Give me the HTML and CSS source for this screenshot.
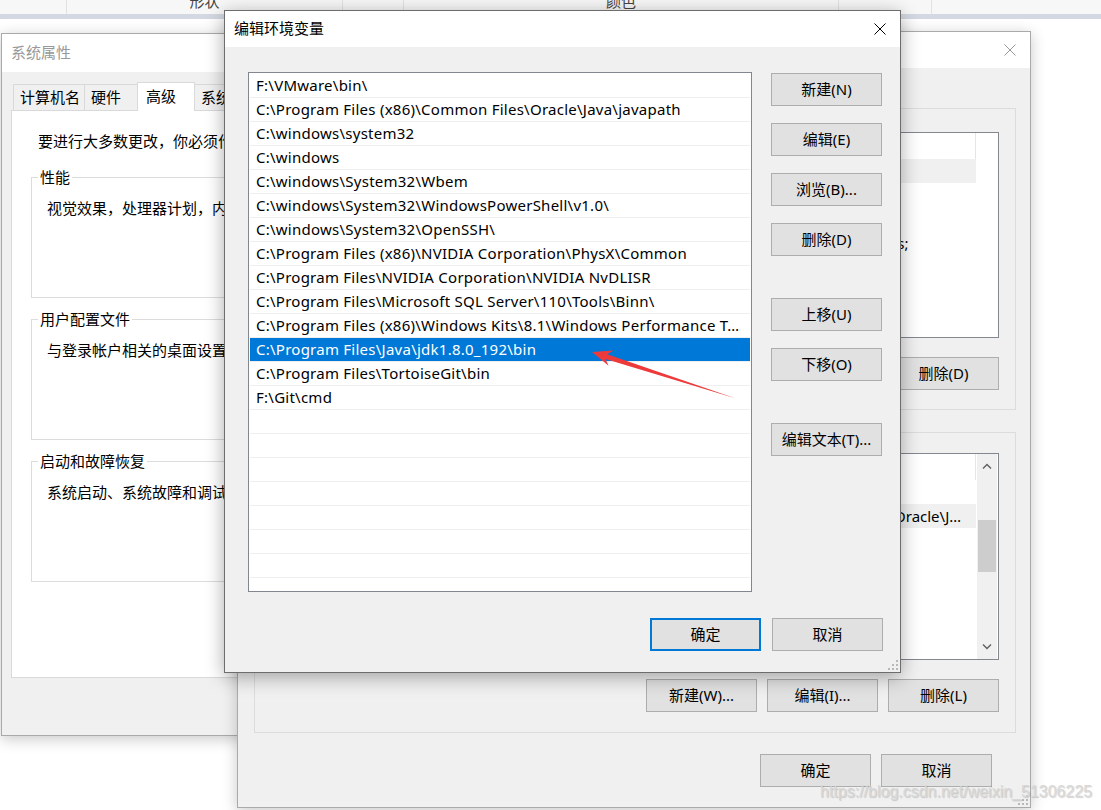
FILE: index.html
```html
<!DOCTYPE html>
<html lang="zh-CN">
<head>
    <meta charset="UTF-8">
    <title>编辑环境变量</title>
    <link rel="stylesheet" href="styles.css">
</head>
<body>
<div class="screen">

    <!-- 后面表格的表头 -->
    <div class="sheet-head">
        <div class="cell c1"></div>
        <div class="cell c2"><span>形状</span></div>
        <div class="cell c3"></div>
        <div class="cell c4"><span>颜色</span></div>
        <div class="cell c5"></div>
        <div class="cell c6"></div>
    </div>

    <!-- 系统属性 -->
    <div class="win win-sys">
        <div class="titlebar"><span class="title">系统属性</span></div>
        <div class="sys-body">
            <div class="tabs">
                <div class="tab t1">计算机名</div>
                <div class="tab t2">硬件</div>
                <div class="tab t3 active">高级</div>
                <div class="tab t4">系统保护</div>
                <div class="tab t5">远程</div>
            </div>
            <div class="tab-panel">
                <p class="note">要进行大多数更改，你必须作为管理员登录。</p>
                <fieldset class="sys-group">
                    <legend>性能</legend>
                    <p>视觉效果，处理器计划，内存使用，以及虚拟内存</p>
                </fieldset>
                <fieldset class="sys-group">
                    <legend>用户配置文件</legend>
                    <p>与登录帐户相关的桌面设置</p>
                </fieldset>
                <fieldset class="sys-group">
                    <legend>启动和故障恢复</legend>
                    <p>系统启动、系统故障和调试信息</p>
                </fieldset>
            </div>
        </div>
    </div>

    <!-- 环境变量 -->
    <div class="win win-env">
        <div class="titlebar">
            <span class="title">环境变量</span>
            <svg class="close dim" width="12" height="12" viewBox="0 0 12 12"><path d="M0.5 0.5L11.5 11.5M11.5 0.5L0.5 11.5"/></svg>
        </div>
        <div class="env-body">
            <fieldset class="var-group user-vars">
                <legend>ASUS 的用户变量(U)</legend>
                <div class="listview">
                    <div class="table-wrap">
                        <table class="vars">
                            <colgroup><col class="col-name"><col></colgroup>
                            <thead><tr><th>变量</th><th>值</th></tr></thead>
                            <tbody>
                                <tr class="sel"><td>ChocolateyLastPathUpdate</td><td>132493586213404718</td></tr>
                                <tr><td>IntelliJ IDEA</td><td>F:\IntelliJ IDEA 2019.3.3\bin;</td></tr>
                                <tr><td>OneDrive</td><td>C:\Users\ASUS\OneDrive</td></tr>
                                <tr><td>Path</td><td>C:\Users\ASUS\AppData\Local\Microsoft\WindowsApps;</td></tr>
                                <tr><td>TEMP</td><td>%USERPROFILE%\AppData\Local\Temp</td></tr>
                                <tr><td>TMP</td><td>%USERPROFILE%\AppData\Local\Temp</td></tr>
                            </tbody>
                        </table>
                    </div>
                </div>
                <div class="btn-row">
                    <button class="btn">新建(N)...</button>
                    <button class="btn">编辑(E)...</button>
                    <button class="btn">删除(D)</button>
                </div>
            </fieldset>

            <fieldset class="var-group sys-vars">
                <legend>系统变量(S)</legend>
                <div class="listview">
                    <div class="table-wrap">
                        <table class="vars">
                            <colgroup><col class="col-name"><col></colgroup>
                            <thead><tr><th>变量</th><th>值</th></tr></thead>
                            <tbody>
                                <tr><td>OS</td><td>Windows_NT</td></tr>
                                <tr class="sel"><td>Path</td><td>F:\VMware\bin\;C:\Program Files (x86)\Common Files\Oracle\Java\javapath;C:\windows\system32;C:\windows</td></tr>
                                <tr><td>PATHEXT</td><td>.COM;.EXE;.BAT;.CMD;.VBS;.VBE;.JS;.JSE;.WSF;.WSH;.MSC</td></tr>
                                <tr><td>PROCESSOR_ARCHITECTURE</td><td>AMD64</td></tr>
                                <tr><td>PROCESSOR_IDENTIFIER</td><td>Intel64 Family 6 Model 158 Stepping 10</td></tr>
                                <tr><td>PROCESSOR_LEVEL</td><td>6</td></tr>
                                <tr><td>PROCESSOR_REVISION</td><td>9e0a</td></tr>
                            </tbody>
                        </table>
                    </div>
                    <div class="scrollbar">
                        <div class="sb-btn"><svg width="10" height="6" viewBox="0 0 10 6"><path d="M1 5.5L5 1.5L9 5.5"/></svg></div>
                        <div class="sb-track"><div class="sb-thumb"></div></div>
                        <div class="sb-btn"><svg width="10" height="6" viewBox="0 0 10 6"><path d="M1 0.5L5 4.5L9 0.5"/></svg></div>
                    </div>
                </div>
                <div class="btn-row">
                    <button class="btn">新建(W)...</button>
                    <button class="btn">编辑(I)...</button>
                    <button class="btn">删除(L)</button>
                </div>
            </fieldset>

            <div class="btn-row dialog-btns">
                <button class="btn">确定</button>
                <button class="btn">取消</button>
            </div>
        </div>
        <svg class="grip" width="10" height="10" viewBox="0 0 10 10"><rect x="8" y="0" width="2" height="2"/><rect x="4" y="4" width="2" height="2"/><rect x="8" y="4" width="2" height="2"/><rect x="0" y="8" width="2" height="2"/><rect x="4" y="8" width="2" height="2"/><rect x="8" y="8" width="2" height="2"/></svg>
    </div>

    <!-- 编辑环境变量 -->
    <div class="win win-edit">
        <div class="titlebar">
            <span class="title">编辑环境变量</span>
            <svg class="close" width="12" height="12" viewBox="0 0 12 12"><path d="M0.5 0.5L11.5 11.5M11.5 0.5L0.5 11.5"/></svg>
        </div>
        <div class="edit-body">
            <div class="edit-main">
                <ul class="path-list">
                    <li>F:\VMware\bin\</li>
                    <li>C:\Program Files (x86)\Common Files\Oracle\Java\javapath</li>
                    <li>C:\windows\system32</li>
                    <li>C:\windows</li>
                    <li>C:\windows\System32\Wbem</li>
                    <li>C:\windows\System32\WindowsPowerShell\v1.0\</li>
                    <li>C:\windows\System32\OpenSSH\</li>
                    <li>C:\Program Files (x86)\NVIDIA Corporation\PhysX\Common</li>
                    <li>C:\Program Files\NVIDIA Corporation\NVIDIA NvDLISR</li>
                    <li>C:\Program Files\Microsoft SQL Server\110\Tools\Binn\</li>
                    <li>C:\Program Files (x86)\Windows Kits\8.1\Windows Performance Toolkit\</li>
                    <li class="sel">C:\Program Files\Java\jdk1.8.0_192\bin</li>
                    <li>C:\Program Files\TortoiseGit\bin</li>
                    <li>F:\Git\cmd</li>
                    <li></li><li></li><li></li><li></li><li></li><li></li><li></li><li></li>
                </ul>
                <div class="side-btns">
                    <button class="btn">新建(N)</button>
                    <button class="btn">编辑(E)</button>
                    <button class="btn">浏览(B)...</button>
                    <button class="btn">删除(D)</button>
                    <button class="btn gap-lg">上移(U)</button>
                    <button class="btn">下移(O)</button>
                    <button class="btn gap-lg">编辑文本(T)...</button>
                </div>
            </div>
            <div class="btn-row edit-foot">
                <button class="btn default">确定</button>
                <button class="btn">取消</button>
            </div>
        </div>
        <svg class="grip" width="10" height="10" viewBox="0 0 10 10"><rect x="8" y="0" width="2" height="2"/><rect x="4" y="4" width="2" height="2"/><rect x="8" y="4" width="2" height="2"/><rect x="0" y="8" width="2" height="2"/><rect x="4" y="8" width="2" height="2"/><rect x="8" y="8" width="2" height="2"/></svg>
    </div>

    <!-- 红色箭头标注 -->
    <svg class="mark-arrow" width="160" height="66" viewBox="0 0 160 66">
        <polygon points="7,12 28.5,10.5 22.1,14.2 151,58.5 20.5,19 23.6,25.7"/>
    </svg>

    <div class="watermark">https://blog.csdn.net/weixin_51306225</div>
</div>
</body>
</html>
```

FILE: styles.css
```css
* {
    margin: 0;
    padding: 0;
    box-sizing: border-box;
}

body {
    font-family: "Noto Sans", "Noto Sans CJK SC", sans-serif;
    font-size: 15px;
    color: #000;
    background-color: #fff;
}

.screen {
    position: relative;
    width: 1101px;
    height: 810px;
    overflow: hidden;
    background-color: #fff;
}

/* 背景表格表头 */
.sheet-head {
    display: flex;
    height: 19px;
    background-color: #f7f7f7;
    border-bottom: 5px solid #d3d8e2;
}

.sheet-head .cell {
    display: flex;
    align-items: flex-end;
    justify-content: center;
    overflow: hidden;
    border-right: 1px solid #e2e2e2;
    color: #444;
}

.sheet-head .cell span {
    line-height: 16px;
    margin-bottom: 5px;
}

.sheet-head .c1 { width: 67px; }
.sheet-head .c2 { width: 276px; }
.sheet-head .c3 { width: 61px; }
.sheet-head .c4 { width: 435px; }
.sheet-head .c5 { width: 93px; }
.sheet-head .c6 { flex: 1; border-right: none; }

/* 窗口 */
.win {
    position: absolute;
    display: flex;
    flex-direction: column;
    background-color: #f0f0f0;
    border: 1px solid #aaa;
    box-shadow: 0 3px 14px rgba(0, 0, 0, 0.22);
}

.win-sys {
    left: 1px;
    top: 33px;
    width: 300px;
    height: 703px;
    z-index: 1;
}

.win-env {
    left: 237px;
    top: 31px;
    width: 794px;
    height: 777px;
    z-index: 2;
}

.win-edit {
    left: 224px;
    top: 10px;
    width: 677px;
    height: 663px;
    z-index: 3;
    border-color: #6d6d6d;
    box-shadow: 0 4px 18px rgba(0, 0, 0, 0.33);
}

.titlebar {
    display: flex;
    align-items: center;
    justify-content: space-between;
    flex-shrink: 0;
    height: 36px;
    padding: 0 14px 3px 9px;
    background-color: #fff;
}

.titlebar .close {
    margin-top: 2px;
}

.win-sys .titlebar {
    height: 38px;
    color: #999;
}

.close path {
    stroke: #000;
    stroke-width: 1;
    fill: none;
}

.close.dim path {
    stroke: #999;
}

.grip {
    position: absolute;
    right: 2px;
    bottom: 2px;
    fill: #b8b8b8;
}

/* 按钮 */
.btn {
    width: 111px;
    height: 33px;
    padding-bottom: 2px;
    font-family: inherit;
    font-size: 15px;
    color: #000;
    background-color: #e1e1e1;
    border: 1px solid #adadad;
}

.btn.default {
    border: 2px solid #0078d7;
}

.btn-row {
    display: flex;
    justify-content: flex-end;
}

/* 系统属性 */
.sys-body {
    flex: 1;
    padding: 10px 0 0 9px;
    overflow: hidden;
}

.tabs {
    display: flex;
    align-items: flex-end;
    height: 28px;
    margin-left: 2px;
}

.tab {
    flex-shrink: 0;
    height: 26px;
    line-height: 24px;
    padding-left: 6px;
    background-color: #f0f0f0;
    border: 1px solid #d9d9d9;
    border-bottom: none;
    margin-right: -1px;
}

.tab.active {
    position: relative;
    z-index: 1;
    height: 29px;
    line-height: 26px;
    padding-left: 8px;
    margin-bottom: -1px;
    background-color: #fff;
}

.t1 { width: 72px; }
.t2 { width: 54px; }
.t3 { width: 58px; }
.t4 { width: 80px; }
.t5 { width: 50px; }

.tab-panel {
    height: 568px;
    padding: 20px 0 0 19px;
    background-color: #fff;
    border: 1px solid #d9d9d9;
    white-space: nowrap;
    overflow: hidden;
}

.note {
    line-height: 20px;
    padding-left: 7px;
    margin-bottom: 16px;
}

.sys-group {
    width: 270px;
    height: 131px;
    margin-bottom: 11px;
    padding: 11px 0 0 6px;
    border: 1px solid #dcdcdc;
}

.sys-group legend {
    padding: 0 2px;
    line-height: 20px;
}

.sys-group p {
    line-height: 20px;
    padding-left: 9px;
}

/* 环境变量 */
.env-body {
    flex: 1;
    padding: 30px 14px 0 16px;
}

.var-group {
    padding: 0 16px 0 15px;
    border: 1px solid #dcdcdc;
}

.var-group legend {
    padding: 0 2px;
    line-height: 20px;
}

.user-vars {
    padding-top: 14px;
    padding-bottom: 19px;
}

.sys-vars {
    margin-top: 12px;
    padding-top: 11px;
    padding-bottom: 20px;
}

.listview {
    display: flex;
    background-color: #fff;
    border: 1px solid #828790;
    overflow: hidden;
}

.user-vars .listview {
    height: 206px;
}

.sys-vars .listview {
    height: 207px;
}

.table-wrap {
    width: 706px;
    overflow: hidden;
}

.vars {
    width: 705px;
    table-layout: fixed;
    border-collapse: collapse;
}

.col-name {
    width: 240px;
}

.vars th {
    height: 26px;
    padding: 0 6px;
    font-weight: normal;
    text-align: left;
    border-right: 1px solid #e5e5e5;
}

.vars td {
    height: 24px;
    padding: 0 6px;
    white-space: nowrap;
    overflow: hidden;
    text-overflow: ellipsis;
}

.vars tr.sel td {
    background-color: #f0f0f0;
}

.scrollbar {
    display: flex;
    flex-direction: column;
    width: 20px;
    background-color: #f0f0f0;
}

.sb-btn {
    display: flex;
    align-items: center;
    justify-content: center;
    height: 24px;
}

.sb-btn path {
    fill: none;
    stroke: #606060;
    stroke-width: 1.4;
}

.sb-track {
    flex: 1;
    padding: 42px 1px 0;
}

.sb-thumb {
    height: 52px;
    background-color: #cdcdcd;
}

.user-vars .btn-row,
.sys-vars .btn-row {
    gap: 10px;
    margin-top: 19px;
}

.dialog-btns {
    gap: 10px;
    margin-top: 21px;
    padding-right: 24px;
}

/* 编辑环境变量 */
.edit-body {
    flex: 1;
    padding: 25px 17px 0 23px;
}

.edit-main {
    display: flex;
}

.path-list {
    list-style: none;
    width: 504px;
    height: 520px;
    padding-top: 1px;
    background-color: #fff;
    border: 1px solid #828790;
    overflow: hidden;
}

.path-list li {
    height: 24px;
    line-height: 22px;
    margin: 0 1px;
    padding: 0 8px 0 6px;
    letter-spacing: 0.25px;
    border-bottom: 1px solid #efefef;
    white-space: nowrap;
    overflow: hidden;
    text-overflow: ellipsis;
}

.path-list li.sel {
    color: #fff;
    background-color: #0078d7;
}

.side-btns {
    display: flex;
    flex-direction: column;
    gap: 17px;
    margin-left: 19px;
    padding-top: 1px;
}

.side-btns .gap-lg {
    margin-top: 25px;
}

.edit-foot {
    gap: 11px;
    margin-top: 26px;
}

/* 标注 */
.mark-arrow {
    position: absolute;
    left: 585px;
    top: 340px;
    z-index: 4;
    fill: #ee3a3a;
}

.watermark {
    position: absolute;
    left: 820px;
    top: 782px;
    z-index: 5;
    font-family: "Liberation Sans", Arial, sans-serif;
    font-size: 16px;
    line-height: 20px;
    color: #d8d8d8;
    text-shadow: 1px 1px 1px rgba(0, 0, 0, 0.18);
}
```
